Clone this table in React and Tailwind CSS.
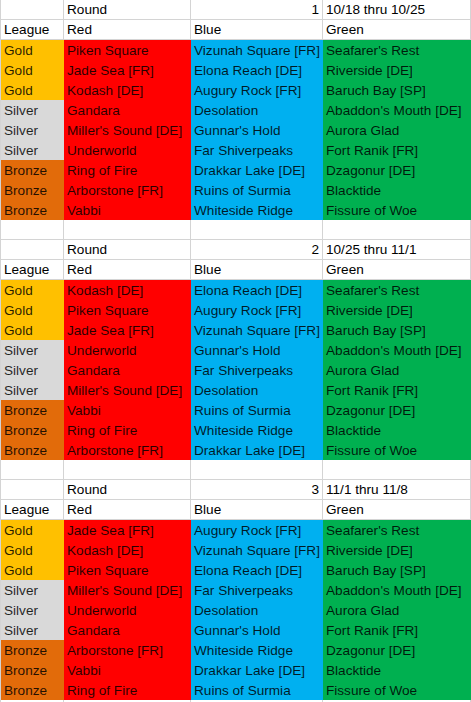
import React from 'react';

const leagueBg = {
  Gold: 'bg-[#ffc000]',
  Silver: 'bg-[#d9d9d9]',
  Bronze: 'bg-[#e26b0a]',
};

const rounds = [
  {
    num: 1,
    dates: '10/18 thru 10/25',
    rows: [
      ['Gold', 'Piken Square', 'Vizunah Square [FR]', "Seafarer's Rest"],
      ['Gold', 'Jade Sea [FR]', 'Elona Reach [DE]', 'Riverside [DE]'],
      ['Gold', 'Kodash [DE]', 'Augury Rock [FR]', 'Baruch Bay [SP]'],
      ['Silver', 'Gandara', 'Desolation', "Abaddon's Mouth [DE]"],
      ['Silver', "Miller's Sound [DE]", "Gunnar's Hold", 'Aurora Glad'],
      ['Silver', 'Underworld', 'Far Shiverpeaks', 'Fort Ranik [FR]'],
      ['Bronze', 'Ring of Fire', 'Drakkar Lake [DE]', 'Dzagonur [DE]'],
      ['Bronze', 'Arborstone [FR]', 'Ruins of Surmia', 'Blacktide'],
      ['Bronze', 'Vabbi', 'Whiteside Ridge', 'Fissure of Woe'],
    ],
  },
  {
    num: 2,
    dates: '10/25 thru 11/1',
    rows: [
      ['Gold', 'Kodash [DE]', 'Elona Reach [DE]', "Seafarer's Rest"],
      ['Gold', 'Piken Square', 'Augury Rock [FR]', 'Riverside [DE]'],
      ['Gold', 'Jade Sea [FR]', 'Vizunah Square [FR]', 'Baruch Bay [SP]'],
      ['Silver', 'Underworld', "Gunnar's Hold", "Abaddon's Mouth [DE]"],
      ['Silver', 'Gandara', 'Far Shiverpeaks', 'Aurora Glad'],
      ['Silver', "Miller's Sound [DE]", 'Desolation', 'Fort Ranik [FR]'],
      ['Bronze', 'Vabbi', 'Ruins of Surmia', 'Dzagonur [DE]'],
      ['Bronze', 'Ring of Fire', 'Whiteside Ridge', 'Blacktide'],
      ['Bronze', 'Arborstone [FR]', 'Drakkar Lake [DE]', 'Fissure of Woe'],
    ],
  },
  {
    num: 3,
    dates: '11/1 thru 11/8',
    rows: [
      ['Gold', 'Jade Sea [FR]', 'Augury Rock [FR]', "Seafarer's Rest"],
      ['Gold', 'Kodash [DE]', 'Vizunah Square [FR]', 'Riverside [DE]'],
      ['Gold', 'Piken Square', 'Elona Reach [DE]', 'Baruch Bay [SP]'],
      ['Silver', "Miller's Sound [DE]", 'Far Shiverpeaks', "Abaddon's Mouth [DE]"],
      ['Silver', 'Underworld', 'Desolation', 'Aurora Glad'],
      ['Silver', 'Gandara', "Gunnar's Hold", 'Fort Ranik [FR]'],
      ['Bronze', 'Arborstone [FR]', 'Whiteside Ridge', 'Dzagonur [DE]'],
      ['Bronze', 'Vabbi', 'Drakkar Lake [DE]', 'Blacktide'],
      ['Bronze', 'Ring of Fire', 'Ruins of Surmia', 'Fissure of Woe'],
    ],
  },
];

// plain white cell keeps the sheet gridlines, filled cells hide them
const Cell = ({ children, fill, right }) => (
  <div
    className={`h-5 flex items-end pb-[2px] px-[3px] overflow-hidden whitespace-nowrap leading-none ${
      fill ? `${fill} text-black/85` : 'bg-white border-r border-b border-[#d4d4d4] text-black'
    } ${right ? 'justify-end' : ''}`}
  >
    {children}
  </div>
);

const RoundBlock = ({ round, last }) => (
  <>
    <Cell />
    <Cell>Round</Cell>
    <Cell right>{round.num}</Cell>
    <Cell>{round.dates}</Cell>

    <Cell>League</Cell>
    <Cell>Red</Cell>
    <Cell>Blue</Cell>
    <Cell>Green</Cell>

    {round.rows.map(([league, red, blue, green], i) => (
      <React.Fragment key={i}>
        <Cell fill={leagueBg[league]}>{league}</Cell>
        <Cell fill="bg-[#ff0000]">{red}</Cell>
        <Cell fill="bg-[#00b0f0]">{blue}</Cell>
        <Cell fill="bg-[#00b050]">{green}</Cell>
      </React.Fragment>
    ))}

    {!last && (
      <>
        <Cell />
        <Cell />
        <Cell />
        <Cell />
      </>
    )}
  </>
);

export default function App() {
  return (
    <div className="w-[471px] h-[702px] overflow-hidden bg-white border-l border-[#d4d4d4] font-['Liberation_Sans',Arial,sans-serif] text-[13.6px]">
      <div className="grid grid-cols-[63px_127px_132px_1fr]">
        {rounds.map((r, i) => (
          <RoundBlock key={r.num} round={r} last={i === rounds.length - 1} />
        ))}
        <Cell />
        <Cell />
        <Cell />
        <Cell />
      </div>
    </div>
  );
}
